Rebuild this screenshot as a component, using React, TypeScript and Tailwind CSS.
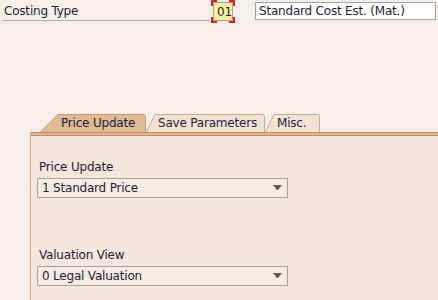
import React from "react";

const font = { fontFamily: "Tahoma, 'DejaVu Sans', sans-serif", letterSpacing: "-0.2px" };

const Caret = () => (
  <svg width="9" height="6" viewBox="0 0 9 6" className="shrink-0">
    <path d="M0 0 H9 L4.5 5.5 Z" fill="#6b5a36" />
  </svg>
);

const Select = ({ value }: { value: string }) => (
  <div className="flex h-[20px] w-[251px] items-center justify-between border border-[#a8a29a] bg-[#f6ece4] pl-[4px] pr-[5px] text-[12px] text-[#1e1e36]">
    <span>{value}</span>
    <Caret />
  </div>
);

const Corner = ({ className }: { className: string }) => (
  <span className={`absolute h-[6px] w-[6px] border-[#e0201e] ${className}`} />
);

type TabProps = { label: string; active?: boolean; slant: number; width: number };

const Tab = ({ label, active, slant, width }: TabProps) => {
  const fill = active ? "#dfba95" : "#f3e3d5";
  const stroke = active ? "#c49a75" : "#c9ab90";
  return (
    <div className="relative flex h-[18px] items-center" style={{ width }}>
      <svg className="absolute inset-0" width={width} height={18} viewBox={`0 0 ${width} 18`}>
        <path
          d={`M0.5 18 L${slant} 0.5 H${width - 3} Q${width - 0.5} 0.5 ${width - 0.5} 3 V18`}
          fill={fill}
          stroke={stroke}
        />
      </svg>
      <span className="relative text-[12px] text-[#1e1e36]" style={{ paddingLeft: slant + 3 }}>
        {label}
      </span>
    </div>
  );
};

export default function App() {
  return (
    <div className="h-[300px] w-[438px] overflow-hidden bg-[#f5eeea]" style={font}>
      <div className="flex h-[23px] items-start pt-[2px]">
        <div className="ml-[2px] flex h-[19px] w-[208px] items-end border-b border-[#b5b0ac] pb-[2px] pl-[2px] text-[12px] leading-[14px] text-[#1e1e36]">
          Costing Type
        </div>
        <div className="relative ml-[3px]">
          <Corner className="-left-[2px] -top-[2px] border-l-2 border-t-2" />
          <Corner className="-right-[2px] -top-[2px] border-r-2 border-t-2" />
          <Corner className="-bottom-[2px] -left-[2px] border-b-2 border-l-2" />
          <Corner className="-bottom-[2px] -right-[2px] border-b-2 border-r-2" />
          <div className="flex h-[19px] w-[20px] items-center border border-[#a9a39a] bg-[#fcefa0] pl-[3px] text-[12px] text-[#1e1e36]">
            01<span className="ml-[1px] h-[13px] w-[1px] bg-[#1e1e36]" />
          </div>
        </div>
        <div className="ml-[22px] flex h-[18px] w-[181px] items-center border border-[#a3a3a3] bg-white pl-[3px] text-[12px] text-[#1e1e36]">
          Standard Cost Est. (Mat.)
        </div>
      </div>

      <div className="ml-[30px] mt-[91px]">
        <div className="flex items-end pl-[10px]">
          <Tab label="Price Update" active slant={18} width={106} />
          <Tab label="Save Parameters" slant={9} width={119} />
          <Tab label="Misc." slant={9} width={55} />
        </div>
        <div className="h-[170px] border-l border-[#d6a57e] bg-[#f5e7dd]">
          <div className="h-[4px] border-y border-[#c38f68] bg-[#ddb693]" />
          <div className="pl-[6px] pt-[24px] text-[#1e1e36]">
            <div className="pl-[2px] text-[12px] leading-[14px]">Price Update</div>
            <div className="mt-[4px]">
              <Select value="1 Standard Price" />
            </div>
            <div className="mt-[50px] pl-[2px] text-[12px] leading-[14px]">Valuation View</div>
            <div className="mt-[4px]">
              <Select value="0 Legal Valuation" />
            </div>
          </div>
        </div>
      </div>
    </div>
  );
}
